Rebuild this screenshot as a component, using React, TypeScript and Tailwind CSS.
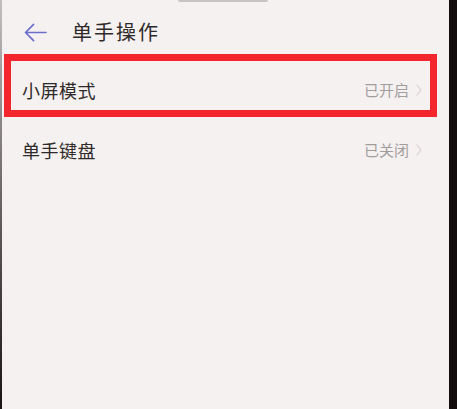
import React from 'react';

const BackIcon: React.FC<{ className?: string }> = ({ className }) => (
  <svg className={className} viewBox="0 0 24 20" fill="none" stroke="currentColor" strokeWidth="1.8" strokeLinecap="round" strokeLinejoin="round">
    <path d="M23 10H2M10 1.5L1.5 10l8.5 8.5" />
  </svg>
);

const ChevronIcon: React.FC<{ className?: string }> = ({ className }) => (
  <svg className={className} viewBox="0 0 6 12" fill="none" stroke="currentColor" strokeWidth="1.2" strokeLinecap="round" strokeLinejoin="round">
    <path d="M1 1l4 5-4 5" />
  </svg>
);

interface RowProps {
  label: string;
  value: string;
}

const SettingRow: React.FC<RowProps> = ({ label, value }) => (
  <div className="flex h-[60px] items-center justify-between pl-[20px] pr-[27px]">
    <span className="text-[18px] tracking-[0.5px] text-[#2e2a2a]">{label}</span>
    <div className="flex items-center gap-[7px]">
      <span className="text-[15px] text-[#a29d9d]">{value}</span>
      <ChevronIcon className="h-[12px] w-[6px] text-[#d6d0d0]" />
    </div>
  </div>
);

export default function App() {
  return (
    <div
      className="relative flex h-[409px] w-full overflow-hidden bg-[#f6f1f1]"
      style={{ fontFamily: '"Noto Sans CJK SC", "Noto Sans", sans-serif' }}
    >
      <div className="w-[2px] bg-gradient-to-b from-[#c4bfbf] to-[#1a1414]" />

      <div className="flex flex-1 flex-col">
        {/* Header */}
        <div className="flex h-[60px] items-center pt-[4px]">
          <BackIcon className="ml-[22px] h-[19px] w-[23px] text-[#6b6fcb]" />
          <h1 className="ml-[25px] text-[20px] font-normal tracking-[2px] text-[#2e2a2a]">单手操作</h1>
        </div>

        <SettingRow label="小屏模式" value="已开启" />
        <SettingRow label="单手键盘" value="已关闭" />
      </div>

      <div className="w-[8px] bg-[#120c0c]" />

      {/* top notch edge */}
      <div className="absolute left-[178px] top-0 h-[2px] w-[90px] rounded-b bg-[#c9c4c4]" />

      {/* red highlight annotation */}
      <div className="absolute left-[4px] top-[54px] h-[63px] w-[433px] border-[7px] border-[#f2262c]" />
    </div>
  );
}
